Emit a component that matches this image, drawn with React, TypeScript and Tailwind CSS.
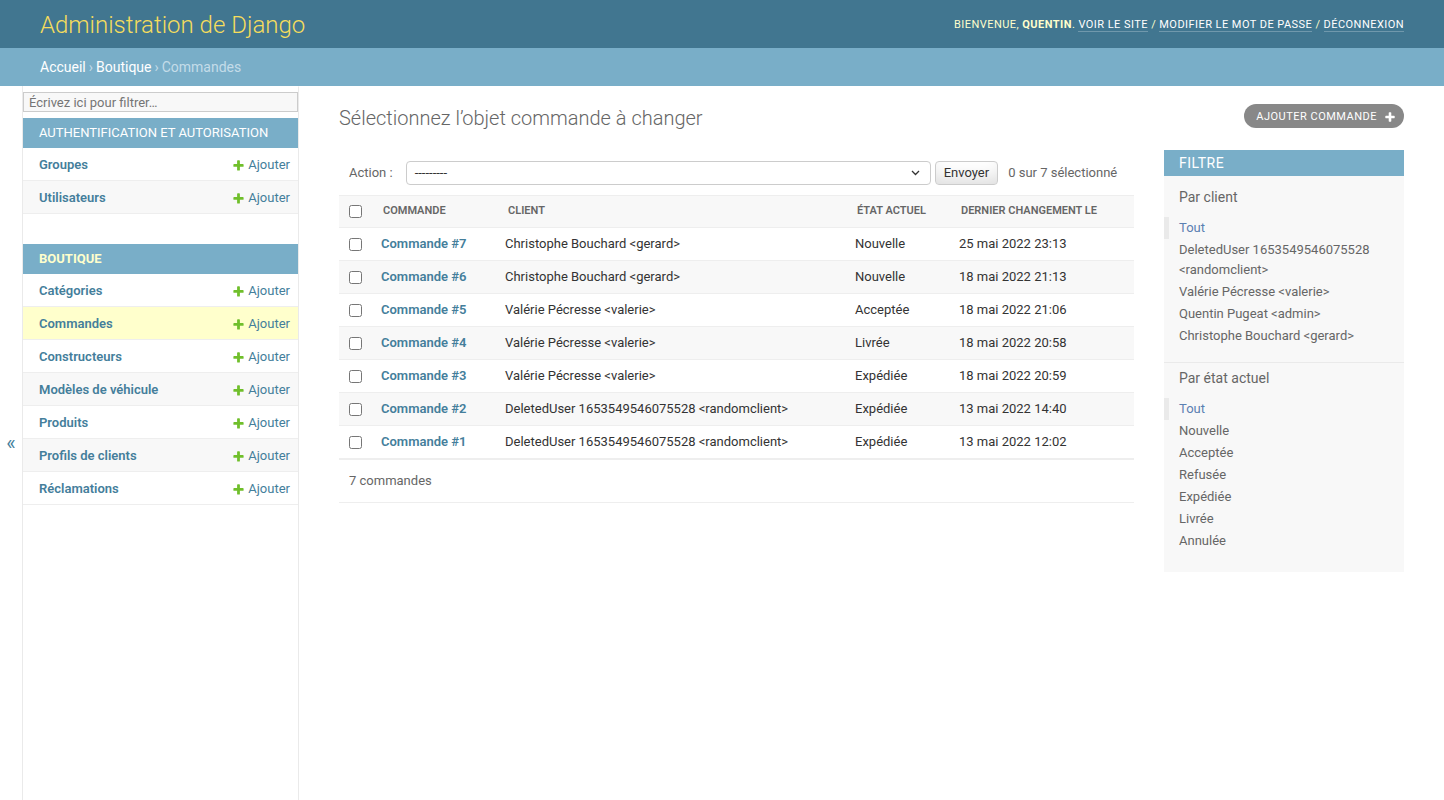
import React from "react";

const PLUS_D =
  "M1600 796v192q0 40-28 68t-68 28h-416v416q0 40-28 68t-68 28h-192q-40 0-68-28t-28-68v-416h-416q-40 0-68-28t-28-68v-192q0-40 28-68t68-28h416v-416q0-40 28-68t68-28h192q40 0 68 28t28 68v416h416q40 0 68 28t28 68z";

function PlusIcon({ className }: { className?: string }) {
  return (
    <svg viewBox="0 0 1792 1792" className={className}>
      <path fill="currentColor" d={PLUS_D} />
    </svg>
  );
}

type Model = { name: string; selected?: boolean };

function Module({ caption, models, current }: { caption: string; models: Model[]; current?: boolean }) {
  return (
    <div className="mb-[30px]">
      <div
        className={`h-[30px] flex items-center pl-4 bg-[#79aec8] text-[13px] uppercase ${
          current ? "text-[#ffffcc] font-bold" : "text-white"
        }`}
      >
        {caption}
      </div>
      {models.map((m, i) => (
        <div
          key={m.name}
          className={`h-[33px] flex items-center justify-between pl-4 pr-2 pt-[2px] border-b border-[#eeeeee] text-[13px] ${
            m.selected ? "bg-[#ffffcc]" : i % 2 === 1 ? "bg-[#f8f8f8]" : "bg-white"
          }`}
        >
          <span className="font-semibold text-[#447e9b]">{m.name}</span>
          <span className="flex items-center gap-[3px] text-[#447e9b]">
            <PlusIcon className="w-[13px] h-[13px] text-[#70bf2b]" />
            Ajouter
          </span>
        </div>
      ))}
    </div>
  );
}

const rows = [
  ["Commande #7", "Christophe Bouchard <gerard>", "Nouvelle", "25 mai 2022 23:13"],
  ["Commande #6", "Christophe Bouchard <gerard>", "Nouvelle", "18 mai 2022 21:13"],
  ["Commande #5", "Valérie Pécresse <valerie>", "Acceptée", "18 mai 2022 21:06"],
  ["Commande #4", "Valérie Pécresse <valerie>", "Livrée", "18 mai 2022 20:58"],
  ["Commande #3", "Valérie Pécresse <valerie>", "Expédiée", "18 mai 2022 20:59"],
  ["Commande #2", "DeletedUser 1653549546075528 <randomclient>", "Expédiée", "13 mai 2022 14:40"],
  ["Commande #1", "DeletedUser 1653549546075528 <randomclient>", "Expédiée", "13 mai 2022 12:02"],
];

function FilterList({ items }: { items: string[] }) {
  return (
    <ul className="px-[15px] pb-[15px] text-[13px] leading-[20px] text-[#666666]">
      <li className="py-px border-l-[5px] border-[#eaeaea] pl-[10px] ml-[-15px] text-[#5b80b2]">Tout</li>
      {items.map((t) => (
        <li key={t} className="py-px">
          {t}
        </li>
      ))}
    </ul>
  );
}

export default function App() {
  return (
    <div className="[font-family:Roboto,'Liberation_Sans',sans-serif] text-[14px] text-[#333333] bg-white min-h-[800px]">
      {/* Header */}
      <div className="h-[48px] flex items-center justify-between px-10 pt-[2px] bg-[#417690]">
        <div className="text-[24px] font-light text-[#f5dd5d] leading-none">Administration de Django</div>
        <div className="text-[11px] uppercase tracking-[0.45px] text-[#ffffcc]">
          Bienvenue, <strong className="font-bold">Quentin</strong>.{" "}
          <span className="text-white border-b border-white/25">Voir le site</span> /{" "}
          <span className="text-white border-b border-white/25">Modifier le mot de passe</span> /{" "}
          <span className="text-white border-b border-white/25">Déconnexion</span>
        </div>
      </div>
      {/* Breadcrumbs */}
      <div className="h-[38px] flex items-center px-10 bg-[#79aec8] text-[14px] text-[#c4dce8]">
        <span className="text-white">Accueil</span>
        <span className="mx-[3px]">›</span>
        <span className="text-white">Boutique</span>
        <span className="mx-[3px]">›</span>
        <span>Commandes</span>
      </div>

      <div className="flex min-h-[714px]">
        {/* toggle */}
        <div className="w-[23px] shrink-0 border-r border-[#eaeaea] flex items-center justify-center text-[20px] text-[#447e9b]">
          «
        </div>
        {/* sidebar */}
        <div className="w-[276px] shrink-0 border-r border-[#eaeaea] border-t border-t-transparent">
          <input
            className="block w-full h-[20px] mt-[5px] px-[5px] py-[2px] border border-[#cccccc] bg-[#f8f8f8] text-[13px] placeholder:text-[#757575] outline-none"
            placeholder="Écrivez ici pour filtrer…"
          />
          <div className="mt-[6px]">
            <Module caption="Authentification et autorisation" models={[{ name: "Groupes" }, { name: "Utilisateurs" }]} />
            <Module
              caption="Boutique"
              current
              models={[
                { name: "Catégories" },
                { name: "Commandes", selected: true },
                { name: "Constructeurs" },
                { name: "Modèles de véhicule" },
                { name: "Produits" },
                { name: "Profils de clients" },
                { name: "Réclamations" },
              ]}
            />
          </div>
        </div>
        {/* content */}
        <div className="flex-1 px-10 pt-5">
          <div className="flex items-start justify-between mb-5">
            <h1 className="text-[20px] font-light text-[#666666] leading-[24px]">
              Sélectionnez l’objet commande à changer
            </h1>
            <div className="mt-[-2px] h-[24px] pt-[2px] flex items-center gap-[7px] pl-3 pr-[8px] rounded-full bg-[#888888] text-white text-[11px] uppercase tracking-[0.5px]">
              Ajouter commande
              <PlusIcon className="w-[12px] h-[12px] text-white" />
            </div>
          </div>

          <div className="flex gap-[30px] items-start">
            <div className="flex-1">
              {/* actions */}
              <div className="h-[45px] px-[10px] flex items-center text-[13px] text-[#666666]">
                <span>Action :</span>
                <div className="ml-[13px] w-[525px] h-[24px] border border-[#cccccc] rounded-[4px] flex items-center justify-between pl-[8px] pr-[10px] text-[14px] text-[#333333]">
                  <span className="text-[13px]">---------</span>
                  <svg width="9" height="6" viewBox="0 0 9 6">
                    <polyline points="1,1 4.5,4.5 8,1" fill="none" stroke="#333" strokeWidth="1.3" />
                  </svg>
                </div>
                <div className="ml-[4px] h-[24px] px-[8px] flex items-center border border-[#cccccc] rounded-[4px] bg-white shadow-[inset_0_-15px_20px_-10px_rgba(0,0,0,0.15)] text-[13px] text-[#333333]">
                  Envoyer
                </div>
                <span className="ml-[10px]">0 sur 7 sélectionné</span>
              </div>
              {/* table */}
              <div className="grid grid-cols-[34px_125px_349px_104px_1fr] h-[33px] items-center bg-[#f8f8f8] border-y border-[#eeeeee] text-[11px] font-semibold uppercase text-[#666666]">
                <div className="pl-[10px] flex items-center">
                  <input type="checkbox" className="m-0 w-[13px] h-[13px]" />
                </div>
                <div className="px-[10px]">Commande</div>
                <div className="px-[10px]">Client</div>
                <div className="px-[10px]">État actuel</div>
                <div className="px-[10px]">Dernier changement le</div>
              </div>
              {rows.map((r, i) => (
                <div
                  key={r[0]}
                  className={`grid grid-cols-[34px_125px_349px_104px_1fr] h-[33px] items-center border-b border-[#eeeeee] text-[13px] ${
                    i % 2 === 1 ? "bg-[#f8f8f8]" : "bg-white"
                  }`}
                >
                  <div className="pl-[10px] flex items-center">
                    <input type="checkbox" className="m-0 w-[13px] h-[13px]" />
                  </div>
                  <div className="px-[8px] font-semibold text-[#447e9b]">{r[0]}</div>
                  <div className="px-[7px] whitespace-nowrap">{r[1]}</div>
                  <div className="px-[8px]">{r[2]}</div>
                  <div className="px-[8px]">{r[3]}</div>
                </div>
              ))}
              <div className="border-y border-[#eeeeee] py-[10px] px-[10px] leading-[22px] text-[13px] text-[#666666]">
                7 commandes
              </div>
            </div>

            {/* filter */}
            <div className="w-[240px] shrink-0 bg-[#f8f8f8] pb-[5px]">
              <div className="h-[26px] flex items-center px-[15px] bg-[#79aec8] text-white text-[14px] uppercase tracking-[0.5px]">
                Filtre
              </div>
              <h3 className="mt-[12px] mb-[11px] px-[15px] text-[14px] leading-[18px] text-[#666666]">Par client</h3>
              <div className="border-b border-[#eaeaea]">
                <FilterList
                  items={[
                    "DeletedUser 1653549546075528 <randomclient>",
                    "Valérie Pécresse <valerie>",
                    "Quentin Pugeat <admin>",
                    "Christophe Bouchard <gerard>",
                  ]}
                />
              </div>
              <h3 className="mt-[6px] mb-[11px] px-[15px] text-[14px] leading-[18px] text-[#666666]">Par état actuel</h3>
              <FilterList items={["Nouvelle", "Acceptée", "Refusée", "Expédiée", "Livrée", "Annulée"]} />
            </div>
          </div>
        </div>
      </div>
    </div>
  );
}
